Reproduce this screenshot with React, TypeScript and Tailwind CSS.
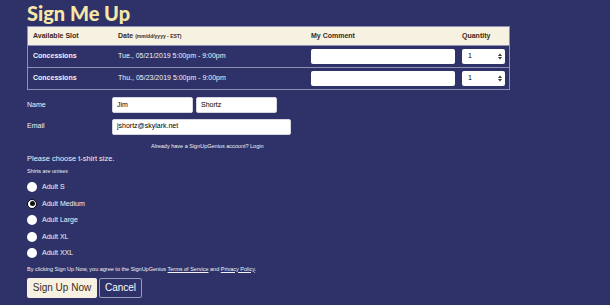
import React from "react";

const sans = { fontFamily: '"Liberation Sans", Arial, sans-serif' };

const rows = [
  { slot: "Concessions", date: "Tue., 05/21/2019 5:00pm - 9:00pm" },
  { slot: "Concessions", date: "Thu., 05/23/2019 5:00pm - 9:00pm" },
];

const sizes = ["Adult S", "Adult Medium", "Adult Large", "Adult XL", "Adult XXL"];

export default function App() {
  return (
    <div className="w-[610px] h-[305px] bg-[#2e3268] pl-[27px] text-[#f2f2f6] overflow-hidden" style={sans}>
      <h1 className="text-[20px] leading-[26px] font-black text-[#f6e7a6]" style={{ fontFamily: "Lato, sans-serif" }}>
        Sign Me Up
      </h1>
      <div className="w-[483px] border border-[#8e90b4]">
        <div className="grid grid-cols-[85px_193px_151px_52px] h-[18px] items-center bg-[#f7f1e1] text-[#3b2a1c] text-[7px] font-bold">
          <div className="pl-[5px]">Available Slot</div>
          <div className="pl-[5px]">
            Date <span className="text-[5px]">(mm/dd/yyyy - EST)</span>
          </div>
          <div className="pl-[5px]">My Comment</div>
          <div className="pl-[5px]">Quantity</div>
        </div>
        {rows.map((r, i) => (
          <div key={i} className="grid grid-cols-[85px_193px_151px_52px] h-[22px] items-center border-t border-[#8e90b4] text-[7px]">
            <div className="pl-[5px] font-bold">{r.slot}</div>
            <div className="pl-[5px]">{r.date}</div>
            <div className="pl-[5px]">
              <div className="w-[144px] h-[15px] bg-white rounded-[2px]" />
            </div>
            <div className="pl-[5px]">
              <QtySelect />
            </div>
          </div>
        ))}
      </div>

      <div className="mt-[7px] flex items-center h-[16px] text-[7px]">
        <div className="w-[85px]">Name</div>
        <Field value="Jim" w="w-[81px]" />
        <div className="w-[3px]" />
        <Field value="Shortz" w="w-[81px]" />
      </div>
      <div className="mt-[6px] flex items-center h-[15px] text-[7px]">
        <div className="w-[85px]">Email</div>
        <Field value="jshortz@skylark.net" w="w-[179px]" />
      </div>
      <div className="mt-[8px] pl-[124px] text-[5.5px] leading-[8px]">Already have a SignUpGenius account? Login</div>
      <div className="mt-[4px] text-[7.5px] leading-[10px]">Please choose t-shirt size.</div>
      <div className="mt-[3px] text-[5.5px] leading-[8px]">Shirts are unisex</div>
      <div className="mt-[4px] flex flex-col">
        {sizes.map((s, i) => (
          <div key={s} className="flex items-center h-[16.5px] text-[7px]">
            <span
              className={
                i === 1
                  ? "w-[10px] h-[10px] rounded-full bg-white border-[1.5px] border-black flex items-center justify-center"
                  : "w-[10px] h-[10px] rounded-full bg-white"
              }
            >
              {i === 1 && <span className="w-[5px] h-[5px] rounded-full bg-[#111]" />}
            </span>
            <span className="ml-[5px]">{s}</span>
          </div>
        ))}
      </div>
      <div className="mt-[3px] text-[5.5px] leading-[8px]">
        By clicking Sign Up Now, you agree to the SignUpGenius <span className="underline">Terms of Service</span> and{" "}
        <span className="underline">Privacy Policy</span>.
      </div>
      <div className="mt-[5px] flex gap-[2px]">
        <button className="w-[70px] h-[20px] bg-[#f7f1e1] text-[#3b2a1c] text-[10px] rounded-[2px]">Sign Up Now</button>
        <button className="w-[43px] h-[20px] border border-[#9a9cbc] text-white text-[10px] rounded-[2px]">Cancel</button>
      </div>
    </div>
  );
}

function Field(props: { value: string; w: string }) {
  return (
    <div className={`${props.w} h-[16px] bg-white rounded-[2px] border border-[#d6d6de] text-black text-[7px] flex items-center pl-[4px]`}>
      {props.value}
    </div>
  );
}

function QtySelect() {
  return (
    <div className="w-[43px] h-[15px] bg-white rounded-[2px] text-black text-[7px] flex items-center justify-between pl-[6px] pr-[3px]">
      <span>1</span>
      <svg width="4" height="7" viewBox="0 0 4 7">
        <path d="M0 3 L2 0.5 L4 3 Z M0 4 L2 6.5 L4 4 Z" fill="#333" />
      </svg>
    </div>
  );
}
